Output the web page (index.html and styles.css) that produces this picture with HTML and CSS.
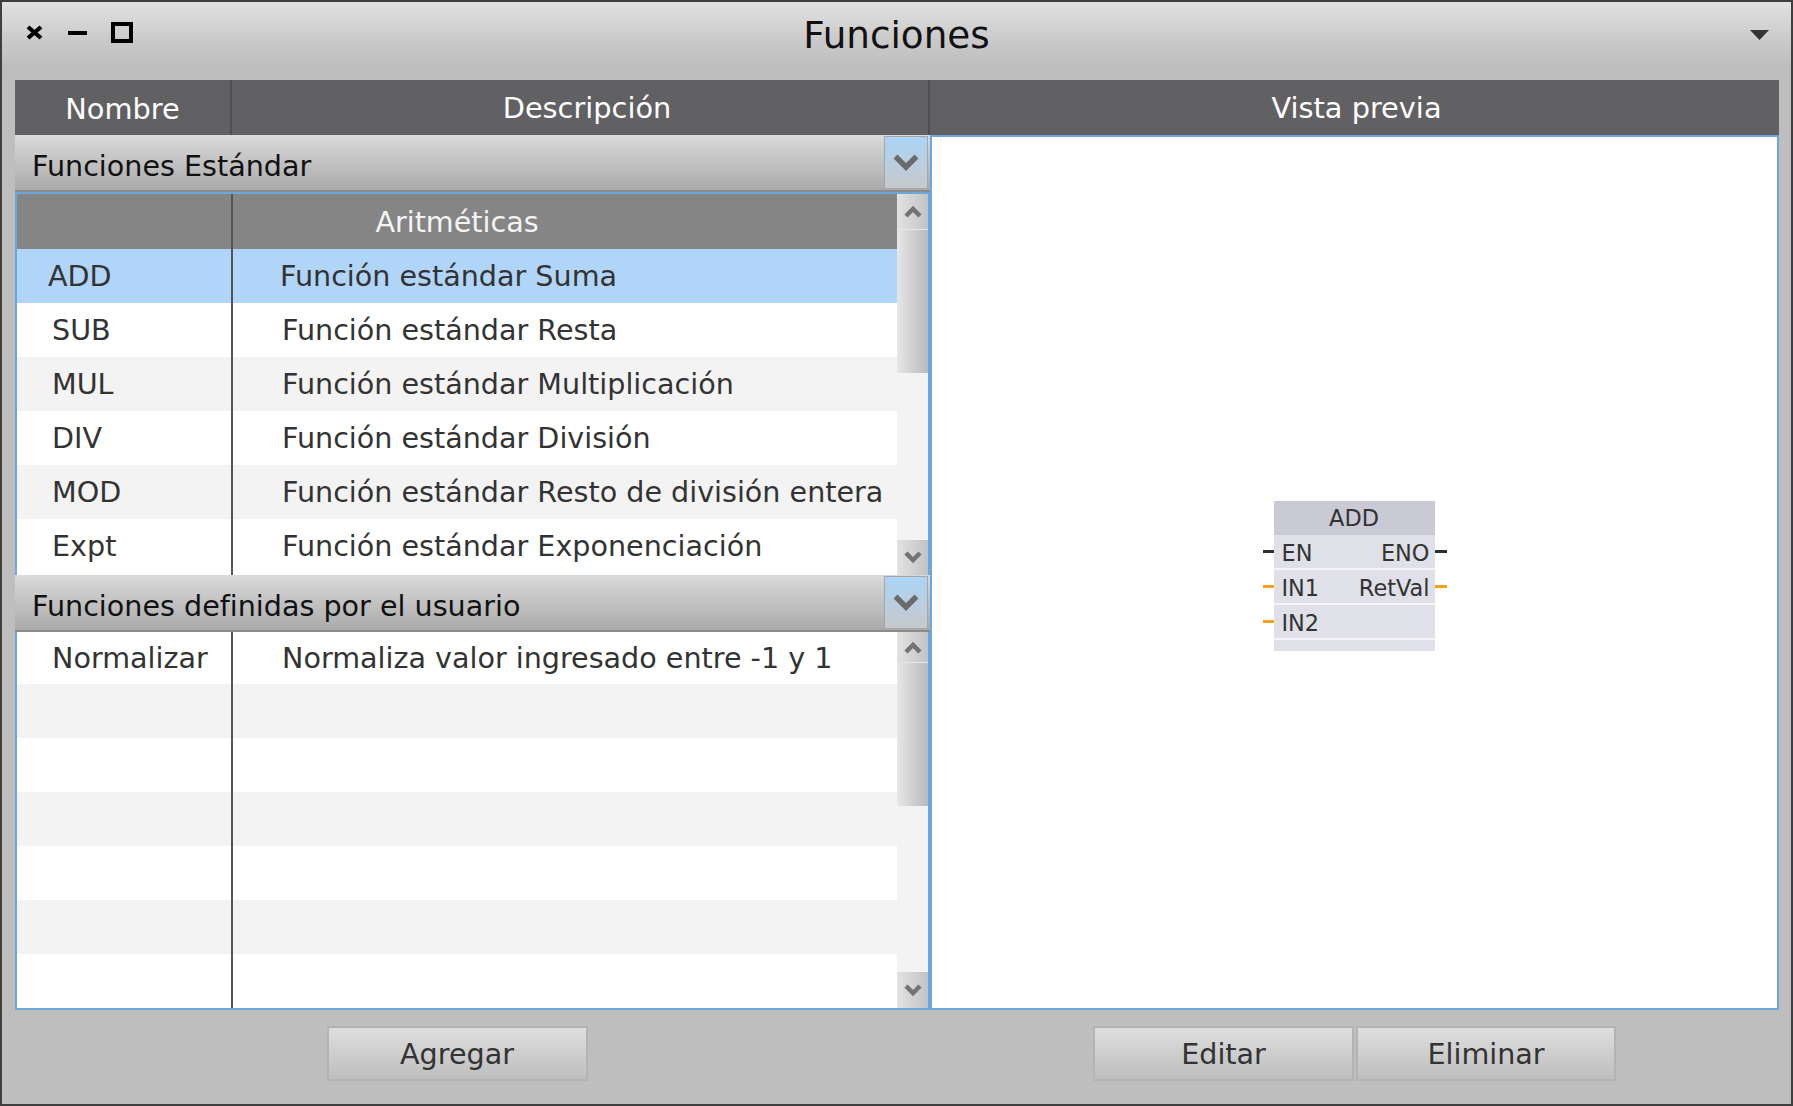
FILE: index.html
```html
<!DOCTYPE html>
<html lang="es">
<head>
<meta charset="utf-8">
<title>Funciones</title>
<link rel="stylesheet" href="styles.css">
</head>
<body>
<div class="window">
  <div class="titlebar">
    <div class="wm">
      <svg class="wm-close" width="17" height="15" viewBox="0 0 17 15"><path d="M2 2 L15 13 M15 2 L2 13" stroke="#000" stroke-width="4.2" fill="none"/></svg>
      <span class="wm-min"></span>
      <span class="wm-max"></span>
    </div>
    <div class="title">Funciones</div>
    <div class="menu">
      <svg width="19" height="10" viewBox="0 0 19 10"><path d="M0 0 H19 L9.5 10 Z" fill="#333"/></svg>
    </div>
  </div>

  <div class="content">
    <div class="colheads">
      <div class="ch ch-name">Nombre</div>
      <div class="ch ch-desc">Descripción</div>
      <div class="ch ch-prev">Vista previa</div>
    </div>

    <div class="panes">
      <div class="left">
        <div class="group">
          <span>Funciones Estándar</span>
          <span class="chev"><svg width="26" height="17" viewBox="0 0 26 17"><path d="M2.5 2.5 L13 13 L23.5 2.5" stroke="#6a6a6a" stroke-width="5.5" fill="none"/></svg></span>
        </div>
        <div class="pane pane1">
          <div class="table">
            <div class="gh">Aritméticas</div>
            <div class="row sel"><div class="n">ADD</div><div class="d">Función estándar Suma</div></div>
            <div class="row"><div class="n">SUB</div><div class="d">Función estándar Resta</div></div>
            <div class="row alt"><div class="n">MUL</div><div class="d">Función estándar Multiplicación</div></div>
            <div class="row"><div class="n">DIV</div><div class="d">Función estándar División</div></div>
            <div class="row alt"><div class="n">MOD</div><div class="d">Función estándar Resto de división entera</div></div>
            <div class="row"><div class="n">Expt</div><div class="d">Función estándar Exponenciación</div></div>
            <div class="row fill"><div class="n"></div><div class="d"></div></div>
          </div>
          <div class="scroll s1">
            <div class="sb-btn sb-up"><svg width="18" height="13" viewBox="0 0 18 13"><path d="M2 11 L9 4 L16 11" stroke="#737373" stroke-width="4.5" fill="none"/></svg></div>
            <div class="sb-thumb"></div>
            <div class="sb-track"></div>
            <div class="sb-btn sb-down"><svg width="18" height="13" viewBox="0 0 18 13"><path d="M2 2 L9 9 L16 2" stroke="#737373" stroke-width="4.5" fill="none"/></svg></div>
          </div>
        </div>
        <div class="group">
          <span>Funciones definidas por el usuario</span>
          <span class="chev"><svg width="26" height="17" viewBox="0 0 26 17"><path d="M2.5 2.5 L13 13 L23.5 2.5" stroke="#6a6a6a" stroke-width="5.5" fill="none"/></svg></span>
        </div>
        <div class="pane pane2">
          <div class="table">
            <div class="row first"><div class="n">Normalizar</div><div class="d">Normaliza valor ingresado entre -1 y 1</div></div>
            <div class="row alt"><div class="n"></div><div class="d"></div></div>
            <div class="row"><div class="n"></div><div class="d"></div></div>
            <div class="row alt"><div class="n"></div><div class="d"></div></div>
            <div class="row"><div class="n"></div><div class="d"></div></div>
            <div class="row alt"><div class="n"></div><div class="d"></div></div>
            <div class="row"><div class="n"></div><div class="d"></div></div>
          </div>
          <div class="scroll s2">
            <div class="sb-btn sb-up"><svg width="18" height="13" viewBox="0 0 18 13"><path d="M2 11 L9 4 L16 11" stroke="#737373" stroke-width="4.5" fill="none"/></svg></div>
            <div class="sb-thumb"></div>
            <div class="sb-track"></div>
            <div class="sb-btn sb-down"><svg width="18" height="13" viewBox="0 0 18 13"><path d="M2 2 L9 9 L16 2" stroke="#737373" stroke-width="4.5" fill="none"/></svg></div>
          </div>
        </div>
      </div>

      <div class="preview">
        <div class="fb">
          <div class="fb-head">ADD</div>
          <div class="pin-cell pin-l"><span class="pin pin-bool"></span></div>
          <div class="fb-row"><span>EN</span><span>ENO</span></div>
          <div class="pin-cell pin-r"><span class="pin pin-bool"></span></div>
          <div class="pin-cell pin-l"><span class="pin pin-num"></span></div>
          <div class="fb-row"><span>IN1</span><span>RetVal</span></div>
          <div class="pin-cell pin-r"><span class="pin pin-num"></span></div>
          <div class="pin-cell pin-l"><span class="pin pin-num"></span></div>
          <div class="fb-row"><span>IN2</span><span></span></div>
          <div class="pin-cell pin-r"></div>
          <div class="fb-foot"></div>
        </div>
      </div>
    </div>

    <div class="footer">
      <div class="fl"><button class="btn">Agregar</button></div>
      <div class="fr"><button class="btn">Editar</button><button class="btn btn-narrow">Eliminar</button></div>
    </div>
  </div>
</div>
</body>
</html>
```

FILE: styles.css
```css
html, body {
  margin: 0;
  padding: 0;
}

body {
  background: #3a3a3a;
  font-family: "DejaVu Sans", "Noto Sans", sans-serif;
}

.window {
  width: 1793px;
  height: 1106px;
  box-sizing: border-box;
  border: 2px solid #3f3f3f;
  background: #bebebe;
  display: flex;
  flex-direction: column;
  overflow: hidden;
}

/* ---------- title bar ---------- */
.titlebar {
  flex: none;
  height: 78px;
  display: grid;
  grid-template-columns: 1fr auto 1fr;
  align-items: start;
  background: linear-gradient(#e1e1e1 0, #c9c9c9 40px, #bdbdbd 66px, #bebebe 78px);
}

.wm {
  display: flex;
  align-items: center;
  height: 21px;
  padding-top: 20px;
  padding-left: 24px;
}

.wm-close {
  display: block;
}

.wm-min {
  display: block;
  width: 19px;
  height: 4px;
  background: #000;
  margin-left: 25px;
}

.wm-max {
  display: block;
  width: 22px;
  height: 21px;
  box-sizing: border-box;
  border: 4px solid #000;
  margin-left: 24px;
}

.title {
  padding-top: 12px;
  font-size: 37.3px;
  line-height: 43px;
  color: #111;
}

.menu {
  justify-self: end;
  padding-top: 28px;
  padding-right: 22px;
}

.menu svg {
  display: block;
}

/* ---------- content ---------- */
.content {
  flex: 1;
  display: flex;
  flex-direction: column;
  padding: 0 12px 0 13px;
}

.colheads {
  flex: none;
  display: flex;
  height: 55px;
  background: #616163;
  color: #fff;
  font-size: 28.8px;
}

.ch {
  display: flex;
  align-items: center;
  justify-content: center;
  box-sizing: border-box;
}

.ch-name {
  width: 217px;
  border-right: 2px solid #4f4f51;
  padding-top: 3px;
}

.ch-desc {
  width: 698px;
  border-right: 2px solid #4f4f51;
  padding-left: 14px;
}

.ch-prev {
  flex: 1;
  padding-left: 4px;
}

.panes {
  flex: none;
  display: flex;
  height: 875px;
}

.left {
  width: 915px;
  display: flex;
  flex-direction: column;
}

.group {
  flex: none;
  height: 57px;
  box-sizing: border-box;
  display: flex;
  align-items: center;
  justify-content: space-between;
  padding-left: 17px;
  padding-right: 2px;
  background: linear-gradient(#dadada, #aaaaaa);
  border-bottom: 2px solid #8b8b8b;
  font-size: 28.6px;
  color: #111;
}

.group > span:first-child {
  padding-top: 7px;
}

.chev {
  width: 44px;
  height: 53px;
  box-sizing: border-box;
  border: 1px solid #a6a6a6;
  background: linear-gradient(#acd4f6, #c6c9cc);
  display: flex;
  align-items: center;
  justify-content: center;
}

.chev svg {
  display: block;
}

.pane {
  flex: none;
  box-sizing: border-box;
  display: flex;
  border: 2px solid #6ca6df;
  background: #fff;
  overflow: hidden;
}

.pane1 {
  height: 383px;
  border-bottom: 0;
}

.pane2 {
  height: 378px;
  border-top: 0;
}

.table {
  flex: 1;
  display: flex;
  flex-direction: column;
  background: #fff;
  overflow: hidden;
}

.gh {
  flex: none;
  height: 55px;
  display: flex;
  align-items: center;
  justify-content: center;
  background: linear-gradient(90deg, transparent 214px, #555 214px, #555 216px, transparent 216px), #858586;
  color: #f4f4f4;
  font-size: 28.6px;
}

.row {
  flex: none;
  display: flex;
  height: 54px;
  font-size: 28.6px;
  color: #333;
  background: #fff;
}

.row.first {
  height: 52px;
}

.row.fill {
  flex: 1;
  height: auto;
}

.row.alt {
  background: #f3f3f3;
}

.row.sel {
  background: #b0d5f8;
}

.row .n {
  width: 179px;
  flex: none;
  border-right: 2px solid #555;
  padding-left: 35px;
  display: flex;
  align-items: center;
  white-space: nowrap;
}

.row .d {
  flex: 1;
  padding-left: 49px;
  display: flex;
  align-items: center;
  white-space: nowrap;
}

.row.sel .n {
  padding-left: 31px;
  width: 183px;
}

.row.sel .d {
  padding-left: 47px;
}

/* ---------- scrollbars ---------- */
.scroll {
  flex: none;
  width: 31px;
  display: flex;
  flex-direction: column;
  background: #f3f3f3;
}

.sb-btn {
  flex: none;
  display: flex;
  align-items: center;
  justify-content: center;
  background: linear-gradient(90deg, #e2e2e2, #c3c3c3);
}

.sb-btn svg {
  display: block;
}

.sb-up {
  border-bottom: 1px solid #e6e6e6;
}

.s1 .sb-up {
  height: 35px;
}

.s1 .sb-down {
  height: 35px;
}

.s2 .sb-up {
  height: 30px;
}

.s2 .sb-down {
  height: 36px;
}

.sb-thumb {
  flex: none;
  height: 143px;
  background: linear-gradient(90deg, #e6e6e6, #bababa);
}

.sb-track {
  flex: 1;
  background: #f3f3f3;
}

/* ---------- preview ---------- */
.preview {
  flex: 1;
  box-sizing: border-box;
  background: #fff;
  border: 2px solid #6ca6df;
  display: flex;
  align-items: center;
  justify-content: center;
}

.fb {
  display: grid;
  grid-template-columns: 11px 161px 12px;
  margin-top: 6px;
  font-size: 22.4px;
  color: #333;
}

.fb-head {
  grid-column: 2;
  height: 34px;
  background: #c9cad6;
  display: flex;
  align-items: center;
  justify-content: center;
}

.fb-row {
  grid-column: 2;
  height: 35px;
  box-sizing: border-box;
  border-bottom: 2px solid #f4f4f8;
  background: #dfe0e8;
  display: flex;
  align-items: center;
  justify-content: space-between;
  padding: 3px 5px 0 8px;
}

.pin-cell {
  height: 35px;
  box-sizing: border-box;
  padding-bottom: 2px;
  display: flex;
  align-items: center;
}

.pin-l {
  grid-column: 1;
}

.pin-r {
  grid-column: 3;
}

.pin {
  display: block;
  width: 100%;
  height: 3px;
}

.pin-bool {
  background: #2f2f2f;
}

.pin-num {
  background: #f6a21d;
}

.fb-foot {
  grid-column: 2;
  height: 11px;
  background: #dfe0e8;
}

/* ---------- footer ---------- */
.footer {
  flex: 1;
  display: flex;
}

.fl {
  width: 915px;
  box-sizing: border-box;
  padding-right: 31px;
  padding-top: 16px;
  display: flex;
  justify-content: center;
  align-items: flex-start;
}

.fr {
  flex: 1;
  padding-top: 16px;
  display: flex;
  justify-content: center;
  align-items: flex-start;
  gap: 2px;
}

.btn {
  width: 261px;
  height: 55px;
  box-sizing: border-box;
  border: 2px solid #b3b3b3;
  background: linear-gradient(#dedede, #bebebe);
  font-family: "DejaVu Sans", sans-serif;
  font-size: 28.6px;
  color: #333;
  padding: 0;
  margin: 0;
}

.btn-narrow {
  width: 260px;
}
```
